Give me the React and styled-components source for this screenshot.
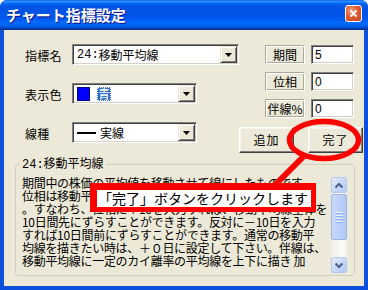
import React from "react";
import styled, { createGlobalStyle } from "styled-components";

const GlobalStyle = createGlobalStyle`
  html, body {
    margin: 0;
    padding: 0;
    background: #ffffff;
  }
  body {
    font-family: "Noto Sans CJK JP", "Noto Sans", sans-serif;
  }
`;

const Window = styled.div`
  position: relative;
  width: 368px;
  height: 290px;
  display: flex;
  flex-direction: column;
  overflow: hidden;
  border-radius: 7px 7px 0 0;
  background: #0a4dda;
`;

const TitleBar = styled.div`
  flex: 0 0 30px;
  display: flex;
  align-items: center;
  justify-content: space-between;
  padding: 0 6px;
  box-sizing: border-box;
  background: linear-gradient(
    to bottom,
    #0058ee 0%,
    #3593ff 4%,
    #288eff 6%,
    #127dff 8%,
    #036ffc 10%,
    #0262ee 14%,
    #0057e5 20%,
    #0054e3 24%,
    #0055eb 56%,
    #005bf5 66%,
    #026afe 76%,
    #0062ef 86%,
    #0052d6 92%,
    #0040ab 94%,
    #003092 100%
  );
`;

const Title = styled.span`
  color: #ffffff;
  font-size: 15px;
  font-weight: bold;
  line-height: 18px;
  text-shadow: 1px 1px 0 #0f1089;
`;

const CloseButton = styled.div`
  width: 17px;
  height: 17px;
  box-sizing: border-box;
  margin-bottom: 4px;
  border: 1px solid #ffffff;
  border-radius: 3px;
  background: radial-gradient(circle at 35% 30%, #f0a080 0%, #e05a32 45%, #c4401f 100%);
  display: flex;
  align-items: center;
  justify-content: center;
`;

const Client = styled.div`
  flex: 1;
  display: flex;
  flex-direction: column;
  background: #ece9d8;
  border: solid #0b4fdc;
  border-width: 0 4px 4px;
  font-size: 12px;
  color: #000000;
`;

const TopSection = styled.div`
  display: flex;
  align-items: flex-start;
  padding: 14px 0 0 21px;
`;

const LeftForm = styled.div`
  flex: 0 0 202px;
  display: grid;
  grid-template-columns: 47px 1fr;
  grid-auto-rows: 21px;
  row-gap: 18px;
`;

const Label = styled.div`
  align-self: center;
  padding-top: 3px;
  line-height: 14px;
  letter-spacing: 0.3px;
`;

const Combo = styled.div`
  width: ${({ $width }) => $width}px;
  height: 21px;
  box-sizing: border-box;
  display: flex;
  align-items: center;
  padding-left: 2px;
  background: #ffffff;
  border: 1px solid;
  border-color: #808080 #ffffff #ffffff #808080;
  box-shadow: inset 1px 1px 0 #404040, inset -1px -1px 0 #d4d0c8;
  line-height: 14px;
`;

const ComboText = styled.span`
  flex: 1;
  display: flex;
  align-items: center;
  padding-left: 2px;
  white-space: nowrap;
`;

const Num = styled.span`
  font-family: "Liberation Mono", "DejaVu Sans Mono", monospace;
  font-size: 12px;
`;

const DropButton = styled.div`
  width: 17px;
  height: 17px;
  margin-right: 1px;
  box-sizing: border-box;
  display: flex;
  align-items: center;
  justify-content: center;
  background: #ece9d8;
  border: 1px solid;
  border-color: #ece9d8 #404040 #404040 #ece9d8;
  box-shadow: inset 1px 1px 0 #ffffff, inset -1px -1px 0 #808080;
`;

const ColorSwatch = styled.span`
  width: 11px;
  height: 12px;
  margin-right: 7px;
  background: #0000ff;
  border: 1px solid #000080;
`;

const SelectedText = styled.span`
  padding: 0 1px;
  color: #ffffff;
  background: #316ac5;
  outline: 1px dotted #ffffff;
  outline-offset: -1px;
`;

const LineSample = styled.span`
  width: 19px;
  height: 2px;
  margin-right: 4px;
  background: #000000;
`;

const RightPanel = styled.div`
  display: flex;
  flex-direction: column;
  margin-top: 1px;
`;

const FieldList = styled.div`
  display: flex;
  flex-direction: column;
  gap: 8px;
  padding-left: 26px;
`;

const FieldRow = styled.div`
  display: flex;
  gap: 6px;
`;

const LabelBox = styled.div`
  width: 40px;
  height: 19px;
  box-sizing: border-box;
  display: flex;
  align-items: center;
  justify-content: center;
  border: 1px solid;
  border-color: #aca899 #ffffff #ffffff #aca899;
  box-shadow: inset 1px 1px 0 #ffffff, inset -1px -1px 0 #aca899;
  line-height: 14px;
  white-space: nowrap;
`;

const NumInput = styled.div`
  width: 43px;
  height: 19px;
  box-sizing: border-box;
  display: flex;
  align-items: center;
  padding-left: 3px;
  background: #ffffff;
  border: 1px solid;
  border-color: #808080 #ffffff #ffffff #808080;
  box-shadow: inset 1px 1px 0 #404040, inset -1px -1px 0 #d4d0c8;
  font-family: "Liberation Sans", "Noto Sans", sans-serif;
  line-height: 14px;
`;

const ButtonRow = styled.div`
  display: flex;
  gap: 14px;
  margin-top: 9px;
`;

const Button = styled.div`
  width: 55px;
  height: 26px;
  box-sizing: border-box;
  display: flex;
  align-items: center;
  justify-content: center;
  background: #ece9d8;
  border: 1px solid;
  border-color: #ffffff #404040 #404040 #ffffff;
  box-shadow: inset -1px -1px 0 #808080, inset 1px 1px 0 #f6f5ef;
  font-size: 12px;
  line-height: 14px;
  letter-spacing: 1px;
`;

const Group = styled.fieldset`
  margin: 3px 9px 0 11px;
  padding: 0 0 0 4px;
  min-width: 0;
  height: 120px;
  box-sizing: border-box;
  border: 1px solid #d0d0bf;
  border-radius: 3px;
`;

const Legend = styled.legend`
  padding: 0 2px;
  font-size: 12px;
  line-height: 14px;
`;

const Memo = styled.div`
  display: flex;
  width: 327px;
  height: 97px;
  margin-top: 4px;
`;

const MemoText = styled.div`
  flex: 1;
  padding-left: 2px;
  line-height: 13px;
  font-size: 12px;
  letter-spacing: -0.3px;
  white-space: nowrap;
`;

const ScrollBar = styled.div`
  width: 16px;
  height: 96px;
  margin-top: 1px;
  display: flex;
  flex-direction: column;
  background: linear-gradient(to right, #eeede5, #fdfdfa 70%, #f3f1ec);
`;

const ScrollButton = styled.div`
  width: 16px;
  height: 16px;
  box-sizing: border-box;
  display: flex;
  align-items: center;
  justify-content: center;
  border: 1px solid #b4c8f6;
  border-radius: 2px;
  background: linear-gradient(135deg, #e6eefc 0%, #c7d7fb 55%, #b4c8f6 100%);
`;

const Thumb = styled.div`
  height: 46px;
  margin: 1px 0 1px;
  box-sizing: border-box;
  display: flex;
  flex-direction: column;
  align-items: center;
  justify-content: center;
  gap: 1px;
  border: 1px solid #9eb3e8;
  border-radius: 2px;
  background: linear-gradient(to right, #cad9fc 0%, #bccffa 60%, #b0c6f6 100%);
`;

const Grip = styled.span`
  width: 7px;
  height: 1px;
  background: #eef4fe;
  box-shadow: 0 1px 0 #8cb0f8;
  margin-bottom: 1px;
`;

const Track = styled.div`
  flex: 1;
`;

const Annotation = styled.svg`
  position: absolute;
  left: 0;
  top: 0;
  pointer-events: none;
`;

const Callout = styled.div`
  position: absolute;
  left: 90px;
  top: 183px;
  width: 226px;
  height: 29px;
  box-sizing: border-box;
  display: flex;
  align-items: center;
  padding-left: 1px;
  background: #ffffff;
  border: solid #ff0000;
  border-width: 7px 5px 5px 7px;
  font-size: 14px;
  line-height: 17px;
  white-space: nowrap;
`;

const memoLines = [
  "期間中の株価の平均値を移動させて線にしたものです。",
  "位相は移動平均線を表示する日をずらすためのものです",
  "。すなわち、位相に＋10を入力すれば、移動平均線全体を",
  "10日間先にずらすことができます。反対に－10日を入力",
  "すれば10日間前にずらすことができます。通常の移動平",
  "均線を描きたい時は、＋０日に設定して下さい。伴線は、",
  "移動平均線に一定のカイ離率の平均線を上下に描き 加",
];

const fields = [
  { label: "期間", value: "5" },
  { label: "位相", value: "0" },
  { label: "伴線%", value: "0" },
];

function Triangle() {
  return (
    <svg width="7" height="4" viewBox="0 0 7 4">
      <path d="M0 0 H7 L3.5 4 Z" fill="#000" />
    </svg>
  );
}

function Chevron({ down }) {
  return (
    <svg width="10" height="7" viewBox="0 0 10 7">
      <path
        d={down ? "M1.5 1.5 L5 5 L8.5 1.5" : "M1.5 5.5 L5 2 L8.5 5.5"}
        fill="none"
        stroke="#4d6185"
        strokeWidth="2"
      />
    </svg>
  );
}

export default function App() {
  return (
    <>
      <GlobalStyle />
      <Window>
        <TitleBar>
          <Title>チャート指標設定</Title>
          <CloseButton>
            <svg width="9" height="9" viewBox="0 0 9 9">
              <path d="M1.5 1.5 L7.5 7.5 M7.5 1.5 L1.5 7.5" stroke="#fff" strokeWidth="2" />
            </svg>
          </CloseButton>
        </TitleBar>
        <Client>
          <TopSection>
            <LeftForm>
              <Label>指標名</Label>
              <Combo $width={167}>
                <ComboText>
                  <Num>24:</Num>移動平均線
                </ComboText>
                <DropButton>
                  <Triangle />
                </DropButton>
              </Combo>
              <Label>表示色</Label>
              <Combo $width={125}>
                <ComboText>
                  <ColorSwatch />
                  <SelectedText>青</SelectedText>
                </ComboText>
                <DropButton>
                  <Triangle />
                </DropButton>
              </Combo>
              <Label>線種</Label>
              <Combo $width={125}>
                <ComboText>
                  <LineSample />
                  実線
                </ComboText>
                <DropButton>
                  <Triangle />
                </DropButton>
              </Combo>
            </LeftForm>
            <RightPanel>
              <FieldList>
                {fields.map((f) => (
                  <FieldRow key={f.label}>
                    <LabelBox>{f.label}</LabelBox>
                    <NumInput>{f.value}</NumInput>
                  </FieldRow>
                ))}
              </FieldList>
              <ButtonRow>
                <Button>追加</Button>
                <Button>完了</Button>
              </ButtonRow>
            </RightPanel>
          </TopSection>
          <Group>
            <Legend>
              <Num>24:</Num>移動平均線
            </Legend>
            <Memo>
              <MemoText>
                {memoLines.map((line) => (
                  <div key={line}>{line}</div>
                ))}
              </MemoText>
              <ScrollBar>
                <ScrollButton>
                  <Chevron />
                </ScrollButton>
                <Thumb>
                  <Grip />
                  <Grip />
                  <Grip />
                  <Grip />
                </Thumb>
                <Track />
                <ScrollButton>
                  <Chevron down />
                </ScrollButton>
              </ScrollBar>
            </Memo>
          </Group>
        </Client>
        <Annotation width="368" height="290" viewBox="0 0 368 290">
          <ellipse cx="324" cy="140" rx="34.5" ry="18.5" fill="none" stroke="#ff0000" strokeWidth="5.5" />
          <line x1="304" y1="156" x2="274" y2="186" stroke="#ff0000" strokeWidth="6" />
        </Annotation>
        <Callout>「完了」ボタンをクリックします</Callout>
      </Window>
    </>
  );
}
